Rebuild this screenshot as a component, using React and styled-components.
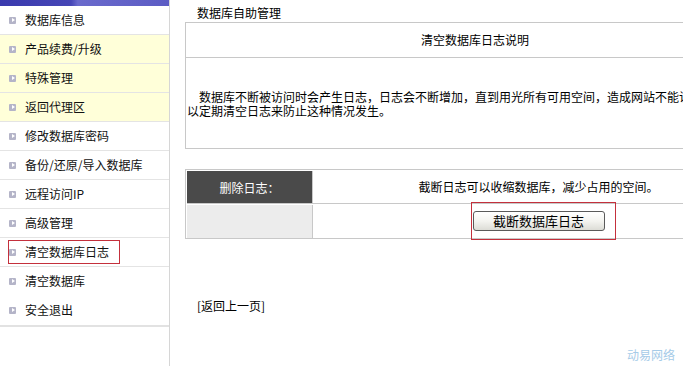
import styled, { createGlobalStyle } from 'styled-components'

const Global = createGlobalStyle`
  html, body {
    margin: 0;
    padding: 0;
    overflow: hidden;
    background: #fff;
  }
  body {
    font-family: "Noto Sans CJK SC", "Liberation Sans", sans-serif;
    font-size: 12px;
    color: #000;
  }
`

const Screen = styled.div`
  position: relative;
  width: 100vw;
  height: 100vh;
  overflow: hidden;
  display: flex;
`

const Sidebar = styled.div`
  flex: 0 0 169px;
  border-right: 1px solid #d6d6d6;
  display: flex;
  flex-direction: column;
`

const TopBar = styled.div`
  height: 6px;
  background: linear-gradient(to right, #3a3aae 0%, #4646b6 42%, #6a6acc 46%, #5c5cc4 100%);
`

const Menu = styled.ul`
  margin: 0;
  padding: 0;
  list-style: none;
  border-bottom: 2px solid #e2e2e2;
`

const MenuItem = styled.li`
  position: relative;
  height: 28px;
  line-height: 28px;
  border-bottom: 1px solid ${props => (props.$last ? 'transparent' : '#e4e4e4')};
  background: ${props => (props.$yellow ? '#ffffd9' : '#fff')};
  display: flex;
  align-items: center;
  padding-left: 9px;
  color: #111;

  &::after {
    content: '';
    display: ${props => (props.$marked ? 'block' : 'none')};
    position: absolute;
    left: 8px;
    top: 2px;
    width: 110px;
    height: 22px;
    border: 1px solid #c4303c;
  }
`

const Bullet = styled.span`
  width: 7px;
  height: 7px;
  margin-right: 9px;
  background: #b4b4c8;
  border-radius: 1px;
  display: flex;
  align-items: center;
  justify-content: center;

  &::before {
    content: '';
    border-left: 3px solid #fff;
    border-top: 2px solid transparent;
    border-bottom: 2px solid transparent;
    margin-left: 1px;
  }
`

const Main = styled.div`
  flex: 0 0 580px;
  margin-left: 15px;
  display: flex;
  flex-direction: column;
`

const PageTitle = styled.div`
  padding: 4px 0 0 12px;
  height: 18px;
  line-height: 18px;
`

const InfoTable = styled.div`
  border: 1px solid #c8c8c8;
  display: flex;
  flex-direction: column;
`

const InfoHead = styled.div`
  height: 34px;
  line-height: 34px;
  text-align: center;
  border-bottom: 1px solid #c8c8c8;
`

const InfoBody = styled.div`
  height: 90px;
  padding: 2px 1px 0;
  box-sizing: border-box;
  display: flex;
  align-items: center;
  line-height: 14px;

  p {
    margin: 0;
    text-indent: 12px;
  }
`

const ActionTable = styled.div`
  margin-top: 20px;
  border: 1px solid #c8c8c8;
  display: grid;
  grid-template-columns: 127px 1fr;
  grid-template-rows: 34px 34px;
`

const Label = styled.div`
  margin: 1px 0 0 1px;
  background: ${props => (props.$dark ? '#4a4a4a' : '#ececec')};
  color: #fff;
  border-right: 1px solid #c8c8c8;
  border-bottom: ${props => (props.$dark ? '1px solid #c8c8c8' : 'none')};
  display: flex;
  align-items: center;
  justify-content: center;
`

const Cell = styled.div`
  border-bottom: ${props => (props.$top ? '1px solid #c8c8c8' : 'none')};
  display: flex;
  align-items: center;
  justify-content: center;
`

const ButtonMark = styled.span`
  position: relative;
  display: inline-flex;

  &::after {
    content: '';
    position: absolute;
    left: -2px;
    right: -11px;
    top: -9px;
    bottom: -9px;
    border: 1px solid #c4303c;
  }
`

const Button = styled.button`
  width: 132px;
  height: 20px;
  padding: 0;
  font-family: inherit;
  font-size: 13px;
  line-height: 18px;
  color: #000;
  border: 1px solid #5a5a5a;
  border-radius: 3px;
  background: linear-gradient(to bottom, #ffffff 0%, #f4f4f0 50%, #dcdcd6 100%);
`

const BackLink = styled.div`
  margin-top: 61px;
  padding-left: 12px;
  line-height: 12px;
`

const Watermark = styled.div`
  position: absolute;
  right: 8px;
  bottom: 3px;
  color: #a6cbe8;
  font-size: 12px;
`

const menu = [
  { text: '数据库信息' },
  { text: '产品续费/升级', yellow: true },
  { text: '特殊管理', yellow: true },
  { text: '返回代理区', yellow: true },
  { text: '修改数据库密码' },
  { text: '备份/还原/导入数据库' },
  { text: '远程访问IP' },
  { text: '高级管理' },
  { text: '清空数据库日志', marked: true },
  { text: '清空数据库', last: true },
  { text: '安全退出', last: true }
]

const App = () => {
  return (
    <Screen>
      <Global />
      <Sidebar>
        <TopBar />
        <Menu>
          {menu.map(item => (
            <MenuItem
              key={item.text}
              $yellow={item.yellow}
              $marked={item.marked}
              $last={item.last}
            >
              <Bullet />
              {item.text}
            </MenuItem>
          ))}
        </Menu>
      </Sidebar>
      <Main>
        <PageTitle>数据库自助管理</PageTitle>
        <InfoTable>
          <InfoHead>清空数据库日志说明</InfoHead>
          <InfoBody>
            <p>
              数据库不断被访问时会产生日志，日志会不断增加，直到用光所有可用空间，造成网站不能访问，所以可
              <br />
              以定期清空日志来防止这种情况发生。
            </p>
          </InfoBody>
        </InfoTable>
        <ActionTable>
          <Label $dark>删除日志：</Label>
          <Cell $top>截断日志可以收缩数据库，减少占用的空间。</Cell>
          <Label />
          <Cell>
            <ButtonMark>
              <Button>截断数据库日志</Button>
            </ButtonMark>
          </Cell>
        </ActionTable>
        <BackLink>[返回上一页]</BackLink>
      </Main>
      <Watermark>动易网络</Watermark>
    </Screen>
  )
}

export default App
